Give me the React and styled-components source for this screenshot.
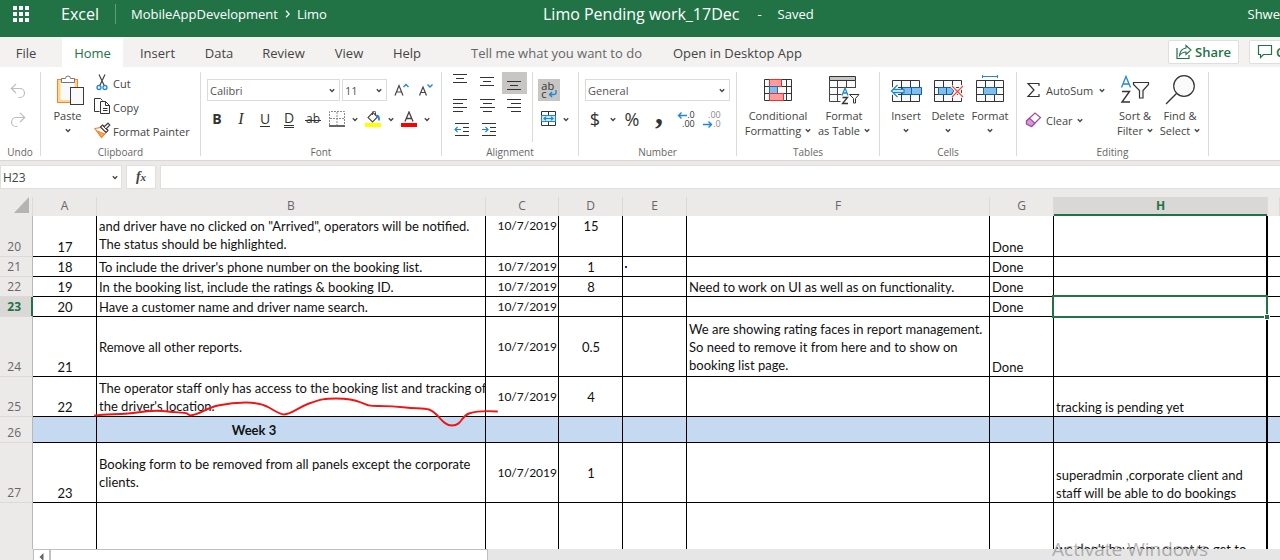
import React from "react";
import styled, { createGlobalStyle, css } from "styled-components";

const ui = `"Open Sans", "Noto Sans", sans-serif`;
const sheet = `Lato, "Open Sans", sans-serif`;
const green = "#217346";
const ink = "#444444";
const blue = "#1e88d2";

const Global = createGlobalStyle`
  *, *::before, *::after { box-sizing: border-box; }
  body { margin: 0; background: #ebeae9; font-family: ${ui}; color: ${ink}; }
  button, input, select { font: inherit; color: inherit; margin: 0; padding: 0; border: 0; border-radius: 0; background: none; }
  svg { display: block; flex: none; }
`;

const Shell = styled.div`
  display: flex;
  flex-direction: column;
  height: 100vh;
  overflow: hidden;
  position: relative;
`;

/* ---------- title bar ---------- */
const TitleBar = styled.header`
  display: flex;
  align-items: center;
  height: 37px;
  padding-bottom: 9px;
  background: ${green};
  color: #fff;
  white-space: nowrap;
  overflow: hidden;
`;
const TitleStart = styled.div`
  display: flex;
  align-items: center;
  flex: 0 1 543px;
  padding-left: 13px;
`;
const Brand = styled.span`
  margin-left: 31px;
  width: 54px;
  font-size: 16px;
`;
const TitleRule = styled.span`
  width: 1px;
  height: 20px;
  margin-right: 15px;
  background: #5f9c7b;
`;
const Crumbs = styled.nav`
  display: flex;
  align-items: center;
  gap: 7px;
  font-size: 13px;
  a { color: #fff; text-decoration: none; }
`;
const DocTitle = styled.h1`
  margin: 0;
  font-size: 16px;
  font-weight: 400;
`;
const SaveState = styled.span`
  display: flex;
  gap: 16px;
  margin-left: 18px;
  font-size: 13px;
`;
const UserName = styled.span`
  margin-left: auto;
  font-size: 13px;
`;

/* ---------- tabs ---------- */
const TabBar = styled.nav`
  display: flex;
  height: 30px;
  background: #f3f2f1;
  font-size: 13px;
  white-space: nowrap;
  overflow: hidden;
`;
const Tab = styled.button`
  flex: none;
  width: ${(p) => p.$w}px;
  height: 30px;
  padding-top: 2px;
  text-align: center;
  ${(p) => p.$active && css`background: #fff; color: ${green};`}
`;
const TabSpacer = styled.span`
  flex: none;
  width: 10px;
`;
const TabLink = styled.button`
  flex: none;
  height: 30px;
  padding-top: 2px;
  margin-left: ${(p) => p.$gap}px;
  color: ${(p) => (p.$dim ? "#666" : ink)};
`;
const TabActions = styled.div`
  display: flex;
  gap: 10px;
  width: 112px;
  margin-left: auto;
  padding-top: 3px;
`;
const ActionButton = styled.button`
  display: flex;
  align-items: center;
  flex: none;
  gap: 3px;
  height: 24px;
  padding: 0 7px;
  border: 1px solid #e1dfdd;
  border-radius: 2px;
  background: #fff;
  color: ${green};
  font-weight: 600;
`;

/* ---------- ribbon ---------- */
const Ribbon = styled.section`
  display: flex;
  padding: 5px 0 4px;
  border-bottom: 1px solid #d9d7d5;
  background: #fff;
  font-size: 11px;
  white-space: nowrap;
  flex: none;
`;
const GroupBox = styled.div`
  display: flex;
  flex-direction: column;
  flex: none;
  width: ${(p) => p.$w}px;
  height: 84px;
  border-right: 1px solid #dddbd9;
`;
const GroupBody = styled.div`
  display: flex;
  height: 76px;
  padding-left: ${(p) => p.$pad || 0}px;
`;
const GroupLabel = styled.div`
  font-size: 10px;
  line-height: 8px;
  text-align: center;
  color: #666;
`;
const Stack = styled.div`
  display: flex;
  flex-direction: column;
  padding-top: ${(p) => p.$top || 0}px;
  gap: ${(p) => p.$gap || 0}px;
`;
const InsetStack = styled(Stack)`
  padding-left: 5px;
`;
const Row = styled.div`
  display: flex;
  align-items: center;
  gap: ${(p) => p.$gap || 0}px;
`;
const InsetRow = styled(Row)`
  padding-left: 2px;
`;
const EditingTools = styled.div`
  display: flex;
  flex-direction: column;
  gap: 8px;
  width: 88px;
  padding-top: 7px;
`;
const BigButton = styled.button`
  display: flex;
  flex-direction: column;
  align-items: center;
  flex: none;
  width: ${(p) => p.$w}px;
  height: 68px;
  line-height: 15px;
`;
const BigIcon = styled.span`
  display: flex;
  align-items: center;
  height: 36px;
`;
const BigLine = styled.span`
  display: flex;
  align-items: center;
  gap: 4px;
  height: 15px;
`;
const SmallButton = styled.button`
  display: flex;
  align-items: center;
  gap: ${(p) => p.$gap || 1}px;
  height: 22px;
`;
const SmallToolButton = styled.button`
  width: 16px;
  height: 16px;
`;
const ToolButton = styled.button`
  display: flex;
  align-items: center;
  justify-content: center;
  flex: none;
  width: ${(p) => p.$w || 24}px;
  height: ${(p) => p.$h || 24}px;
  background: ${(p) => (p.$on ? "#c8c6c4" : "none")};
`;
const AlignGrid = styled.div`
  display: grid;
  grid-template-columns: repeat(3, 27px);
  grid-auto-rows: 22px;
  row-gap: 1px;
  justify-items: end;
  align-content: start;
  padding-right: 5px;
  height: 70px;
  border-right: 1px solid #dddbd9;
`;
const SelectWrap = styled.span`
  position: relative;
  display: flex;
  flex: none;
  width: ${(p) => p.$w}px;
  height: 22px;
  border: 1px solid #dddbd9;
  svg { position: absolute; right: 4px; top: 8px; pointer-events: none; }
`;
const SelectBox = styled.select`
  appearance: none;
  width: 100%;
  padding-left: 2px;
  color: #555;
`;

/* ---------- formula bar ---------- */
const FormulaBar = styled.section`
  display: flex;
  flex: none;
  height: 36px;
  padding: 4px 0 8px;
  font-size: 12px;
`;
const NameBox = styled.label`
  display: flex;
  align-items: center;
  width: 122px;
  padding: 0 3px 0 2px;
  margin-right: 4px;
  border: 1px solid #e1dfdd;
  background: #fff;
  input { width: 100%; min-width: 0; }
`;
const FxButton = styled.button`
  width: 30px;
  margin-right: 4px;
  border: 1px solid #e1dfdd;
  background: #fff;
  font: italic 700 14px/20px "Liberation Serif", serif;
  small { font-size: 11px; }
`;
const FormulaInput = styled.input`
  flex: 1;
  min-width: 0;
  border: 1px solid #e1dfdd;
  border-right: 0;
  background: #fff;
`;

/* ---------- sheet ---------- */
const SheetPane = styled.main`
  position: relative;
  flex: 1;
  min-height: 0;
  overflow: hidden;
`;
const SheetTable = styled.table`
  width: 100%;
  table-layout: fixed;
  border-collapse: separate;
  border-spacing: 0;
  background: #fff;
  color: #111;
  font-family: ${sheet};
  font-size: 13px;
  line-height: 18px;
`;
const Col = styled.col`
  width: ${(p) => p.$w}px;
`;
const ColHead = styled.th`
  height: 19px;
  padding: 0;
  border-right: 1px solid #dcdad8;
  background: #ebeae9;
  color: #666;
  font: 400 12px/18px ${ui};
  vertical-align: top;
  ${(p) => p.$on && css`
    background: #d9d8d6;
    color: ${green};
    font-weight: 700;
    box-shadow: inset 0 -2px ${green};
  `}
  svg { margin-left: auto; margin-right: 2px; }
`;
const RowHead = styled.th`
  padding: 0 11px 0 0;
  border-right: 1px solid #b8b8b8;
  border-bottom: 1px solid #dcdad8;
  background: #ebeae9;
  color: #666;
  font: 400 12px/18px ${ui};
  text-align: right;
  vertical-align: bottom;
  ${(p) => p.$on && css`
    background: #d9d8d6;
    color: ${green};
    font-weight: 700;
    box-shadow: inset -1px 0 ${green};
    border-right-color: ${green};
  `}
`;
const Cell = styled.td`
  position: relative;
  height: ${(p) => p.$h}px;
  padding: ${(p) => (p.$v === "top" ? 1 : 0)}px ${(p) => p.$padEnd || 1}px 0 2px;
  border-right: ${(p) => (p.$last ? 0 : p.$thick ? 2 : 1)}px solid #000;
  border-bottom: 1px solid #000;
  background: ${(p) => (p.$band ? "#c5d9f1" : "#fff")};
  text-align: ${(p) => p.$align || "left"};
  vertical-align: ${(p) => p.$v || "middle"};
  font-size: ${(p) => (p.$date ? 12 : 13)}px;
  font-weight: ${(p) => (p.$bold ? 700 : 400)};
  white-space: pre;
`;
const Selection = styled.span`
  position: absolute;
  inset: -2px;
  z-index: 1;
  border: 2px solid ${green};
  &::after {
    content: "";
    position: absolute;
    right: -4px;
    bottom: -4px;
    width: 6px;
    height: 6px;
    border: 1px solid #fff;
    background: ${green};
  }
`;
const InkDot = styled.span`
  display: block;
  width: 2px;
  height: 2px;
  background: #2222dd;
`;
const Scribble = styled.svg`
  position: absolute;
  left: 0;
  top: 0;
  pointer-events: none;
`;
const ScrollTrack = styled.footer`
  display: flex;
  flex: none;
  height: 11px;
  padding-left: 33px;
  background: linear-gradient(to right, #ebeae9 32px, #e6e6e6 32px);
`;
const ScrollArrow = styled.button`
  display: flex;
  justify-content: center;
  width: 17px;
  padding-top: 3px;
  border: 1px solid #c0c0c0;
  border-bottom: 0;
  background: #fff;
`;
const ScrollThumb = styled.div`
  width: 438px;
  border: 1px solid #c0c0c0;
  border-bottom: 0;
  background: #fff;
`;
const Watermark = styled.div`
  position: absolute;
  right: 72px;
  bottom: 0;
  z-index: 2;
  font-size: 19px;
  line-height: 22px;
  color: rgba(110, 110, 110, 0.5);
  pointer-events: none;
`;

/* ---------- icons ---------- */
const Svg = ({ w, h, children, ...rest }) => (
  <svg width={w} height={h} viewBox={`0 0 ${w} ${h}`} fill="none" stroke={ink} aria-hidden="true" {...rest}>{children}</svg>
);
const Chevron = () => <Svg w={6} h={5}><path d="M.8 1.2 3 3.4 5.2 1.2" strokeWidth="1.4" /></Svg>;

const Waffle = () => (
  <Svg w={17} h={17} stroke="none">
    {[0, 6, 12].map((y) => [0, 6, 12].map((x) => <rect key={`${x}${y}`} x={x} y={y} width="4" height="4" fill="#fff" />))}
  </Svg>
);
const UndoIcon = ({ flip }) => (
  <Svg w={16} h={16} stroke="#c0bebc">
    <g transform={flip ? "translate(16 0) scale(-1 1)" : undefined}>
      <path d="M6 .8 1.3 5.5 6 10M1.5 5.5H10a4.5 4.5 0 0 1 0 9H8.5" strokeWidth="1.2" />
    </g>
  </Svg>
);
const PasteIcon = () => (
  <Svg w={32} h={32}>
    <rect x="5.5" y="5.5" width="20" height="23" fill="#fcd68a" stroke="#ed8733" />
    <rect x="8.5" y="8" width="14" height="18" fill="#fafafa" stroke="none" />
    <path d="M9.5 8.5v-4h4a2.5 2.5 0 0 1 5 0h4v4z" fill="#fff" stroke="#777" />
    <rect x="18.5" y="13.5" width="13" height="17" fill="#fafafa" stroke="#3a3a3a" />
  </Svg>
);
const CutIcon = () => (
  <Svg w={18} h={18}>
    <path d="M5 .5 10.2 11.5M11 .5 5.8 11.5" strokeWidth="1.2" />
    <circle cx="5" cy="13.5" r="2" stroke={blue} strokeWidth="1.3" />
    <circle cx="11" cy="13.5" r="2" stroke={blue} strokeWidth="1.3" />
  </Svg>
);
const CopyIcon = () => (
  <Svg w={18} h={18} stroke="#333">
    <path d="M5.5 13.5H.5V.5h6l2 2" />
    <path d="M6.5 3.5h5l4 4v8h-9z" fill="#fafafa" />
    <path d="M11.5 3.5v4h4M9 10.5h4.5M9 12.5h4.5" />
  </Svg>
);
const PainterIcon = () => (
  <Svg w={18} h={18}>
    <path d="M1 6.5 7 5.5l5 5-4.500 5z" fill="#fff" stroke="#ed8733" strokeWidth="1.200" />
    <path d="M3.500 9 10.500 12 7.500 15.500z" fill="#f9a94f" stroke="#ed8733" />
    <path d="M6.500 5 8.500 3l2 1.500L14 1.200l1.800 1.800L12.500 6.500 14 8.500l-2 2z" fill="#fff" strokeWidth="1.200" />
    <path d="M8.500 3.500 13.500 8.500" />
  </Svg>
);
const GrowFont = ({ down }) => (
  <Svg w={15} h={15}>
    <path d={down ? "M1.5 12.5 5 4l3.5 8.5M2.8 9.5h4.4" : "M1 12.5 5 2.5l4 10M2.5 9h5"} strokeWidth="1.2" />
    <path d={down ? "M9.5 1.5 12 4l2.5-2.5" : "M9.500 4 12 1.500 14.500 4"} stroke={blue} strokeWidth="1.4" />
  </Svg>
);
const BordersIcon = () => (
  <Svg w={16} h={16}>
    <path d="M.5 14V.5h15V14M8 1v13M1 7.5h14" stroke="#8a8a8a" strokeDasharray="2 1" />
    <path d="M0 15h16" strokeWidth="1.5" stroke="#333" />
  </Svg>
);
const FillIcon = () => (
  <Svg w={16} h={16}>
    <path d="M8 1.5 3 6.5l4.5 4.5L12.5 6z" fill="#fff" strokeWidth="1.1" />
    <path d="M7.5 4V1.5a1.5 1.5 0 0 1 3 0V4" />
    <path d="M11.5 4.5q3 .5 2.5 5" stroke={blue} strokeWidth="1.8" />
    <rect x="0" y="12" width="16" height="4" fill="#ffff00" stroke="none" />
  </Svg>
);
const FontColorIcon = () => (
  <Svg w={16} h={16}>
    <path d="M4 10.5 8 1l4 9.5M5.5 7.5h5" strokeWidth="1.3" />
    <rect x="0" y="12" width="16" height="4" fill="#ff0000" stroke="none" />
  </Svg>
);
const Lines = ({ rows }) => (
  <Svg w={16} h={18} stroke="#333">
    {rows.map(([a, b, y]) => <path key={y} d={`M${a} ${y}H${b}`} />)}
  </Svg>
);
const IndentIcon = ({ right }) => (
  <Svg w={16} h={16} stroke="#333">
    <path d="M2 2.5h14M10 6.5h6M10 10.5h6M2 14.5h14" />
    <path d={right ? "M2 8.5h6M5.500 6 8 8.500 5.500 11" : "M2 8.500h6M4.500 6 2 8.500 4.500 11"} stroke={blue} strokeWidth="1.2" />
  </Svg>
);
const WrapGlyph = styled.span`
  display: flex;
  flex-direction: column;
  font-size: 11px;
  line-height: 8px;
  color: #333;
  span { display: flex; align-items: center; gap: 1px; height: 8px; }
`;
const MergeIcon = () => (
  <Svg w={16} h={16}>
    <path d="M.5.5h14v14H.5zM7.5.5v4M7.5 11v3.5" stroke="#333" />
    <path d="M.5 4.5h14v6H.5z" fill="#cfe8fa" stroke={blue} />
    <path d="M3 7.5h9M5 5.8 3 7.5l2 1.7M10 5.8l2 1.7-2 1.7" stroke={blue} strokeWidth="1.2" />
  </Svg>
);
const DecimalGlyph = styled.span`
  display: flex;
  flex-direction: column;
  align-items: flex-end;
  font-size: 9px;
  line-height: 9px;
  color: ${(p) => (p.$dim ? "#8a8a8a" : "#333")};
  span { display: flex; align-items: center; height: 9px; }
`;
const DecArrow = ({ right }) => (
  <Svg w={10} h={8} stroke={blue}><path d={right ? "M0 4.5h8.5M5.5 1.5l3 3-3 3" : "M1.5 4.5H10M4.5 1.5l-3 3 3 3"} strokeWidth="1.4" /></Svg>
);
const CondIcon = () => (
  <Svg w={28} h={24}>
    <path d="M.5 1.5h27v21H.5zM.5 8.5h27M.5 15.5h27M5.5 1.5v21M22.5 1.5v21" fill="#fafafa" stroke="#333" />
    <rect x="5.5" y="1.5" width="12" height="7" fill="#ff9a9f" stroke="#e3342b" />
    <rect x="5.5" y="8.5" width="8" height="7" fill="#83bdec" stroke="#1e6fb8" />
    <rect x="5.5" y="15.5" width="14" height="7" fill="#ff9a9f" stroke="#e3342b" />
  </Svg>
);
const FormatTableIcon = () => (
  <Svg w={34} h={32}>
    <path d="M2.5 3.5h26V14h-9v14.5h-17z" fill="#fafafa" stroke="none" />
    <path d="M2.5 2.5h26v4h-26z" fill="#c8c6c4" stroke="#333" />
    <path d="M2.5 6.5v21h11M28.5 6.5V14M2.5 13.5h26M2.5 20.5h12M10.5 6.5v21M19.5 6.5V14" stroke="#444" />
    <path d="M15 21.5 18 14l3 7.5M16 19h4" stroke={blue} strokeWidth="1.3" />
    <path d="M15.500 23.500h5l-5 6h5.500" stroke="#333" strokeWidth="1.3" />
    <path d="M22.5 20.5h9.5l-3.500 4v4.500h-2V24.500z" stroke="#333" fill="#fff" />
  </Svg>
);
const CellsIcon = ({ kind }) => (
  <Svg w={32} h={32}>
    <path d="M2.5 6.5h27v21h-27zM2.5 13.5h27M2.5 20.5h27M11.5 6.5v21M20.5 6.5v21" fill="#fafafa" stroke="#333" />
    {kind === "insert" && <>
      <path d="M12.5 13.5h19v7h-19zM21.5 13.5v7" fill="#83bdec" stroke="#0f62ad" />
      <path d="M1 17h13M7.500 11 1.500 17 7.500 23" stroke="#fff" strokeWidth="4" />
      <path d="M7.500 11 1.500 17 7.500 23M3 15.500h11v3H3" fill="#fff" stroke={blue} strokeWidth="1.300" />
    </>}
    {kind === "delete" && <>
      <path d="M6.5 13.5H19l3 3.5-3 3.5H6.5zM14.500 13.500v7" fill="#83bdec" stroke="#0f62ad" />
      <path d="M20 12 31 23M31 12 20 23" stroke="#fff" strokeWidth="3.5" />
      <path d="M20 12 31 23M31 12 20 23" stroke="#f04a41" strokeWidth="1.3" />
    </>}
    {kind === "format" && <>
      <rect x="9.5" y="13.5" width="13" height="7" fill="#83bdec" stroke="#0f62ad" />
      <path d="M8.5 2.5h15M8.5 1v3M23.5 1v3" stroke={blue} />
    </>}
  </Svg>
);
const SigmaIcon = () => <Svg w={17} h={16}><path d="M14 4V1.5H3L9 8l-6 6.5h11V12" stroke="#333" strokeWidth="1.2" /></Svg>;
const EraserIcon = () => (
  <Svg w={17} h={16}>
    <path d="M1.500 9 10 1l5.500 4.500L6.500 14.500l-5-2.500z" fill="#fff" stroke="#a349a4" strokeWidth="1.2" />
    <path d="M1.500 9 4.500 6.200l5.500 5-3.500 3.300-5-2.500z" fill="#d39bd6" stroke="#a349a4" strokeWidth="1.2" />
  </Svg>
);
const SortIcon = () => (
  <Svg w={30} h={32}>
    <path d="M1.5 13.5 6 2.5l4.5 11M3 10h6" stroke={blue} strokeWidth="1.3" />
    <path d="M2 17.5h7.5l-7.5 10.5h8" stroke="#333" strokeWidth="1.4" />
    <path d="M13.5 8.5h15v2l-5.5 6v7.500h-3.500v-7.500l-6-6z" fill="#fafafa" stroke="#333" strokeWidth="1.2" />
  </Svg>
);
const FindIcon = () => (
  <Svg w={32} h={32}>
    <circle cx="20" cy="12" r="10.3" fill="#fafafa" stroke="#333" strokeWidth="1.2" />
    <path d="M12.7 19.3 2 30" stroke="#333" strokeWidth="1.3" />
  </Svg>
);
const ShareIcon = () => (
  <Svg w={16} h={16} stroke={green}>
    <path d="M1 4v10.5h12V11" strokeWidth="1.2" />
    <path d="M10 1.5 15 6l-5 4.5V8Q6 8 3.5 11.5 4 5 10 4z" strokeWidth="1.1" />
  </Svg>
);
const CommentIcon = () => <Svg w={16} h={16} stroke={green}><path d="M1.5 1.5h13v9h-8l-3 3v-3h-2z" strokeWidth="1.2" /></Svg>;

/* ---------- composed parts ---------- */
const Group = ({ label, w, pad, children }) => (
  <GroupBox $w={w}>
    <GroupBody $pad={pad}>{children}</GroupBody>
    <GroupLabel>{label}</GroupLabel>
  </GroupBox>
);
const Big = ({ w, icon, first, second }) => (
  <BigButton $w={w}>
    <BigIcon>{icon}</BigIcon>
    <BigLine>{first}</BigLine>
    <BigLine>{second}<Chevron /></BigLine>
  </BigButton>
);
const Picker = ({ w, label, value }) => (
  <SelectWrap $w={w}>
    <SelectBox aria-label={label} defaultValue={value}><option>{value}</option></SelectBox>
    <Chevron />
  </SelectWrap>
);
const DropArrow = ({ label }) => <ToolButton $w={12} aria-label={label}><Chevron /></ToolButton>;

const Glyph = styled.span`
  font-size: ${(p) => p.$size || 14}px;
  line-height: 18px;
  color: #333;
  ${(p) => p.$kind === "bold" && css`font-weight: 700;`}
  ${(p) => p.$kind === "italic" && css`font-family: "Liberation Serif", serif; font-style: italic;`}
  ${(p) => p.$kind === "under" && css`line-height: 15px; border-bottom: 1px solid #333;`}
  ${(p) => p.$kind === "double" && css`line-height: 15px; border-bottom: 3px double #333;`}
  ${(p) => p.$kind === "strike" && css`padding: 0 1px; background: linear-gradient(#333, #333) 0 10px / 100% 1px no-repeat;`}
  ${(p) => p.$kind === "comma" && css`font-family: "Liberation Serif", serif; font-weight: 700; line-height: 8px; height: 20px;`}
`;

const tabs = [["File", 52], ["Home", 61], ["Insert", 69], ["Data", 54], ["Review", 75], ["View", 56], ["Help", 60]];

const columns = [["A", 64], ["B", 389], ["C", 73], ["D", 64], ["E", 64], ["F", 303], ["G", 64], ["H", 214]];

const rows = [
  { n: 20, h: 41, a: 17, b: "and driver have no clicked on \"Arrived\", operators will be notified.\nThe status should be highlighted.", c: "10/7/2019", d: 15, g: "Done", v: "top" },
  { n: 21, h: 20, a: 18, b: "To include the driver's phone number on the booking list.", c: "10/7/2019", d: 1, e: true, g: "Done" },
  { n: 22, h: 20, a: 19, b: "In the booking list, include the ratings & booking ID.", c: "10/7/2019", d: 8, f: "Need to work on UI as well as on functionality.", g: "Done" },
  { n: 23, h: 20, a: 20, b: "Have a customer name and driver name search.", c: "10/7/2019", g: "Done", selected: true },
  { n: 24, h: 60, a: 21, b: "Remove all other reports.", c: "10/7/2019", d: "0.5", f: "We are showing rating faces in report management.\nSo need to remove it from here and to show on\nbooking list page.", g: "Done" },
  { n: 25, h: 40, a: 22, b: "The operator staff only has access to the booking list and tracking of\nthe driver's location.", c: "10/7/2019", d: 4, hText: "tracking is pending yet" },
  { n: 26, h: 26, b: "Week 3", band: true },
  { n: 27, h: 60, a: 23, b: "Booking form to be removed from all panels except the corporate\nclients.", c: "10/7/2019", d: 1, hText: "superadmin ,corporate client and\nstaff will be able to do bookings" },
  { n: "", h: 56, hText: "we don't have any event to get to" },
];

function SheetRow({ r }) {
  const base = { $h: r.h, $band: r.band };
  return (
    <tr>
      <RowHead scope="row" $on={r.selected}>{r.n}</RowHead>
      <Cell {...base} $align="center" $v="bottom">{r.a}</Cell>
      <Cell {...base} $v={r.v} $align={r.band ? "center" : "left"} $bold={r.band} $padEnd={r.band ? 76 : 0}>{r.b}</Cell>
      <Cell {...base} $v={r.v} $align="right" $date>{r.c}</Cell>
      <Cell {...base} $v={r.v} $align="center">{r.d}</Cell>
      <Cell {...base}>{r.e && <InkDot />}</Cell>
      <Cell {...base}>{r.f}</Cell>
      <Cell {...base} $v="bottom">{r.g}</Cell>
      <Cell {...base} $v="bottom" $thick>{r.hText}{r.selected && <Selection />}</Cell>
      <Cell {...base} $last />
    </tr>
  );
}

export default function App() {
  return (
    <Shell>
      <Global />
      <TitleBar>
        <TitleStart>
          <Waffle />
          <Brand>Excel</Brand>
          <TitleRule />
          <Crumbs aria-label="Location">
            <a href="#folder">MobileAppDevelopment</a>
            <Svg w={5} h={8} stroke="#fff"><path d="M1 .8 4.2 4 1 7.2" strokeWidth="1.3" /></Svg>
            <a href="#limo">Limo</a>
          </Crumbs>
        </TitleStart>
        <DocTitle>Limo Pending work_17Dec</DocTitle>
        <SaveState><span>-</span><span>Saved</span></SaveState>
        <UserName>Shwe</UserName>
      </TitleBar>

      <TabBar>
        {tabs.map(([t, w]) => (
          <React.Fragment key={t}>
            <Tab $w={w} $active={t === "Home"}>{t}</Tab>
            {t === "File" && <TabSpacer />}
          </React.Fragment>
        ))}
        <TabLink $gap={34} $dim>Tell me what you want to do</TabLink>
        <TabLink $gap={31}>Open in Desktop App</TabLink>
        <TabActions>
          <ActionButton><ShareIcon />Share</ActionButton>
          <ActionButton><CommentIcon />Comments</ActionButton>
        </TabActions>
      </TabBar>

      <Ribbon>
        <Group label="Undo" w={41} pad={10}>
          <Stack $top={11} $gap={13}>
            <SmallToolButton aria-label="Undo"><UndoIcon /></SmallToolButton>
            <SmallToolButton aria-label="Redo"><UndoIcon flip /></SmallToolButton>
          </Stack>
        </Group>

        <Group label="Clipboard" w={160}>
          <Big w={53} icon={<PasteIcon />} first="Paste" />
          <Stack $gap={2}>
            <SmallButton><CutIcon />Cut</SmallButton>
            <SmallButton><CopyIcon />Copy</SmallButton>
            <SmallButton><PainterIcon />Format Painter</SmallButton>
          </Stack>
        </Group>

        <Group label="Font" w={241} pad={4}>
          <Stack $top={7} $gap={6}>
            <InsetRow $gap={2}>
              <Picker w={133} label="Font" value="Calibri" />
              <Picker w={45} label="Font size" value="11" />
              <ToolButton $w={24} $h={22} aria-label="Increase font size"><GrowFont /></ToolButton>
              <ToolButton $w={20} $h={22} aria-label="Decrease font size"><GrowFont down /></ToolButton>
            </InsetRow>
            <Row>
              <ToolButton><Glyph $kind="bold">B</Glyph></ToolButton>
              <ToolButton><Glyph $kind="italic" $size={16}>I</Glyph></ToolButton>
              <ToolButton><Glyph $kind="under">U</Glyph></ToolButton>
              <ToolButton><Glyph $kind="double">D</Glyph></ToolButton>
              <ToolButton><Glyph $kind="strike" $size={12}>ab</Glyph></ToolButton>
              <ToolButton aria-label="Borders"><BordersIcon /></ToolButton>
              <DropArrow label="Border options" />
              <ToolButton aria-label="Fill color"><FillIcon /></ToolButton>
              <DropArrow label="Fill options" />
              <ToolButton aria-label="Font color"><FontColorIcon /></ToolButton>
              <DropArrow label="Font color options" />
            </Row>
          </Stack>
        </Group>

        <Group label="Alignment" w={137} pad={4}>
          <AlignGrid>
            <ToolButton $w={25} $h={22} aria-label="Top align"><Lines rows={[[0, 14, 0.5], [3, 11, 4.5], [0, 14, 8.5]]} /></ToolButton>
            <ToolButton $w={25} $h={22} aria-label="Middle align"><Lines rows={[[0, 14, 3.5], [3, 11, 7.5], [0, 14, 11.5]]} /></ToolButton>
            <ToolButton $w={25} $h={22} $on aria-label="Bottom align"><Lines rows={[[0, 14, 7.5], [3, 11, 11.5], [0, 14, 15.5]]} /></ToolButton>
            <ToolButton $w={25} $h={22} aria-label="Align left"><Lines rows={[[0, 14, 2.5], [0, 10, 6.5], [0, 14, 10.5], [0, 10, 14.5]]} /></ToolButton>
            <ToolButton $w={25} $h={22} aria-label="Center"><Lines rows={[[0, 15, 2.5], [3, 12, 6.5], [0, 15, 10.5], [3, 12, 14.5]]} /></ToolButton>
            <ToolButton $w={25} $h={22} aria-label="Align right"><Lines rows={[[0, 14, 2.5], [4, 14, 6.5], [0, 14, 10.5], [4, 14, 14.5]]} /></ToolButton>
            <ToolButton $w={25} $h={22} aria-label="Decrease indent"><IndentIcon /></ToolButton>
            <ToolButton $w={25} $h={22} aria-label="Increase indent"><IndentIcon right /></ToolButton>
          </AlignGrid>
          <InsetStack $top={7} $gap={6}>
            <ToolButton $w={22} $h={22} $on aria-label="Wrap text">
              <WrapGlyph>
                <span>ab</span>
                <span>c<Svg w={9} h={8} stroke={blue}><path d="M8 0v2.5Q8 4.5 5.5 4.5H1.5M4 2 1.5 4.5 4 7" strokeWidth="1.4" /></Svg></span>
              </WrapGlyph>
            </ToolButton>
            <Row>
              <ToolButton $w={22} aria-label="Merge"><MergeIcon /></ToolButton>
              <DropArrow label="Merge options" />
            </Row>
          </InsetStack>
        </Group>

        <Group label="Number" w={158} pad={4}>
          <Stack $top={7} $gap={6}>
            <InsetRow>
              <Picker w={145} label="Number format" value="General" />
            </InsetRow>
            <Row>
              <ToolButton><Glyph $size={18}>$</Glyph></ToolButton>
              <DropArrow label="Currency options" />
              <ToolButton $w={26}><Glyph $size={18}>%</Glyph></ToolButton>
              <ToolButton $w={28}><Glyph $kind="comma" $size={32}>,</Glyph></ToolButton>
              <ToolButton $w={26} aria-label="Increase decimal"><DecimalGlyph><span><DecArrow />.0</span><span>.00</span></DecimalGlyph></ToolButton>
              <ToolButton $w={26} aria-label="Decrease decimal"><DecimalGlyph $dim><span>.00</span><span><DecArrow right />.0</span></DecimalGlyph></ToolButton>
            </Row>
          </Stack>
        </Group>

        <Group label="Tables" w={143} pad={4}>
          <Big w={74} icon={<CondIcon />} first="Conditional" second="Formatting" />
          <Big w={58} icon={<FormatTableIcon />} first="Format" second="as Table" />
        </Group>

        <Group label="Cells" w={137} pad={5}>
          <Big w={42} icon={<CellsIcon kind="insert" />} first="Insert" />
          <Big w={42} icon={<CellsIcon kind="delete" />} first="Delete" />
          <Big w={42} icon={<CellsIcon kind="format" />} first="Format" />
        </Group>

        <Group label="Editing" w={192} pad={8}>
          <EditingTools>
            <SmallButton $gap={4}><SigmaIcon /><Row $gap={6}>AutoSum<Chevron /></Row></SmallButton>
            <SmallButton $gap={4}><EraserIcon /><Row $gap={4}>Clear<Chevron /></Row></SmallButton>
          </EditingTools>
          <Big w={44} icon={<SortIcon />} first="Sort &" second="Filter" />
          <Big w={46} icon={<FindIcon />} first="Find &" second="Select" />
        </Group>
      </Ribbon>

      <FormulaBar>
        <NameBox><input aria-label="Name box" defaultValue="H23" /><Chevron /></NameBox>
        <FxButton aria-label="Insert function">f<small>x</small></FxButton>
        <FormulaInput aria-label="Formula" defaultValue="" />
      </FormulaBar>

      <SheetPane>
        <SheetTable>
          <colgroup>
            <Col $w={33} />
            {columns.map(([c, w]) => <Col key={c} $w={w} />)}
            <col />
          </colgroup>
          <thead>
            <tr>
              <ColHead aria-label="Select all"><Svg w={16} h={16} stroke="none"><path d="M15 0v16H0z" fill="#b4b4b4" /></Svg></ColHead>
              {columns.map(([c]) => <ColHead key={c} scope="col" $on={c === "H"}>{c}</ColHead>)}
              <ColHead />
            </tr>
          </thead>
          <tbody>{rows.map((r) => <SheetRow key={r.n} r={r} />)}</tbody>
        </SheetTable>
        <Scribble width="520" height="240" viewBox="0 197 520 240" fill="none" stroke="#f01414" strokeWidth="1.9" strokeLinecap="round" strokeLinejoin="round">
          <path d="M95 415.500C107 414 125 414.500 137 412.500S160 410.500 168 411.500S184 412.500 187 413.500L190 415.500C200 414.500 206 408 218 405.500S237 402.500 246 402.500S263 404 269 407.500S280 414.500 284 414.500C292 414 297 408 309 403.500S325 398.500 336 398.500S354 399.500 361 402.500S369 406 378 406S397 406.500 406 407.500S424 408 429 409.500C439 413 442 425.500 452 425.500S461 416 469 413.500S484 410.500 497 411.500" />
        </Scribble>
      </SheetPane>

      <ScrollTrack>
        <ScrollArrow aria-label="Scroll left"><Svg w={5} h={8} stroke="none"><path d="M4.5 0v8L.5 4z" fill="#666" /></Svg></ScrollArrow>
        <ScrollThumb />
      </ScrollTrack>
      <Watermark>Activate Windows</Watermark>
    </Shell>
  );
}
